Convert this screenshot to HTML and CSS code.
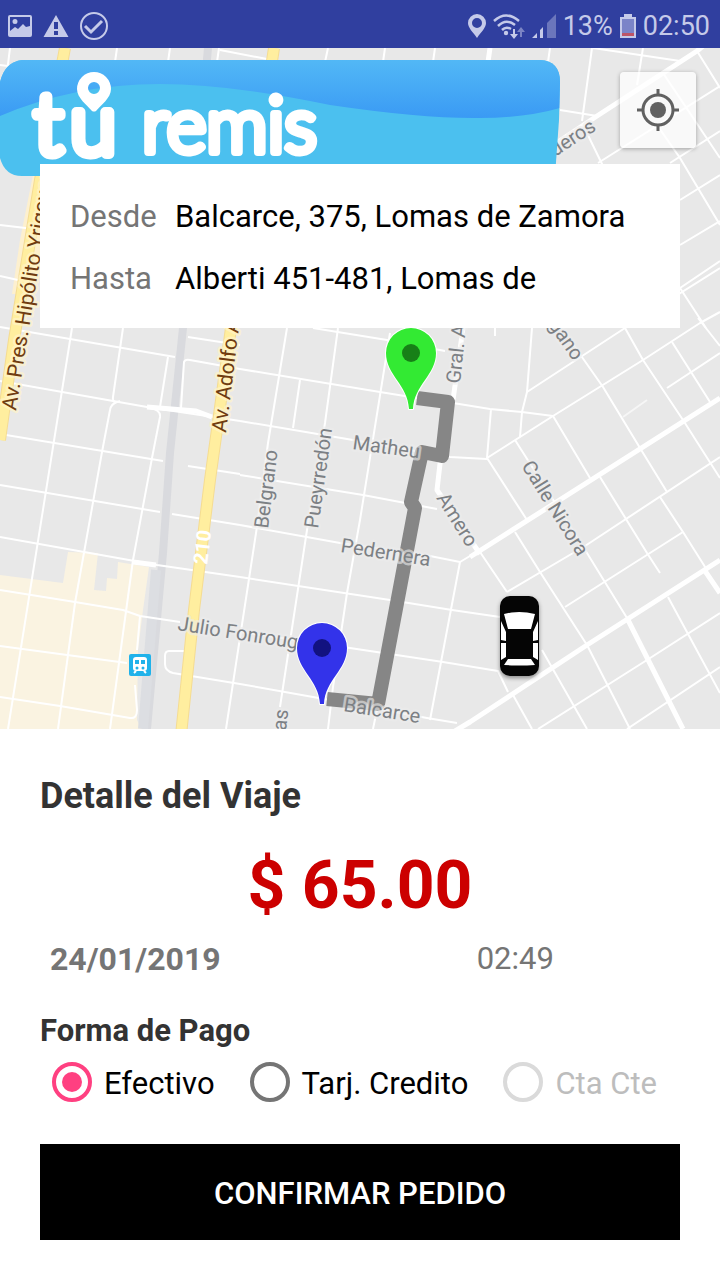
FILE: index.html
```html
<!DOCTYPE html>
<html lang="es">
<head>
<meta charset="utf-8">
<meta name="viewport" content="width=device-width, initial-scale=1">
<title>tú remis - Confirmar pedido</title>
<link rel="stylesheet" href="styles.css">
</head>
<body>
<div class="app">
  <header class="status">
    <div class="status-group status-left">
      <svg class="icon" width="24" height="24" viewBox="0 0 24 24" aria-hidden="true"><path fill-rule="evenodd" d="M2 1h20a2 2 0 0 1 2 2v18a2 2 0 0 1-2 2H2a2 2 0 0 1-2-2V3a2 2 0 0 1 2-2zM2 3v14l5-4 3 2 5-5 3 3 4-1V3zM7 5a2.500 2.500 0 1 1 0 5a2.500 2.500 0 0 1 0-5z"/></svg>
      <svg class="icon" width="26" height="24" viewBox="0 0 26 24" aria-hidden="true"><path fill-rule="evenodd" d="M13 1L25.500 23H.5zM11 8v7h4V8zM11 17v4h4v-4z"/></svg>
      <svg class="icon" width="28" height="28" viewBox="0 0 28 28" aria-hidden="true"><g fill="none" stroke="currentColor" stroke-width="2"><circle cx="14" cy="14" r="13"/><path d="M5 14l6 6L22 9" stroke-width="3"/></g></svg>
    </div>
    <div class="status-group status-right">
      <svg class="icon" width="18" height="24" viewBox="0 0 18 24" aria-hidden="true"><path fill-rule="evenodd" d="M9 0a9 9 0 0 1 9 9c0 5-5 9-9 15C5 18 0 14 0 9a9 9 0 0 1 9-9zM9 4a5 5 0 1 0 0 10A5 5 0 0 0 9 4z"/></svg>
      <svg class="icon" width="32" height="26" viewBox="0 0 32 26" aria-hidden="true"><g fill="none" stroke="currentColor" stroke-width="2.500"><path d="M1 8Q13-3 26 8"/><path d="M5 13Q13 5 22 12"/><path d="M9 17Q13 13 18 16"/></g><circle cx="13" cy="20" r="2.200"/><path d="M20 16h2v5h3l-4 5-4-5h3z"/><path opacity=".5" d="M27 24h2v-5h3l-4-5-4 5h3z"/></svg>
      <svg class="icon" width="24" height="24" viewBox="0 0 24 24" aria-hidden="true"><path opacity=".4" d="M15 9L24 0v24h-9z"/><path d="M0 24l5-5v5zM8 16l3-3v11H8z"/></svg>
      <span class="battery-level">13%</span>
      <svg class="icon" width="16" height="24" viewBox="0 0 16 24" aria-hidden="true"><path d="M4 0h8v3h4v21H0V3h4z"/><path fill="#7b84c8" d="M2 5h12v14H2z"/><path fill="#bd5568" d="M2 19h12v3H2z"/></svg>
      <time>02:50</time>
    </div>
  </header>

  <main class="content">
    <section class="map" aria-label="Mapa del viaje">
      <svg class="map-canvas" viewBox="0 48 720 681" preserveAspectRatio="xMidYMid slice" role="img" aria-label="Recorrido">
        <path class="district" d="M0 575L63 583L68 552L98 553L94 590L106 591L107 578L117 579L118 562L149 567L143 610L138 650L137 720L142 729H0z"/>
        <path class="shade" d="M40 170V270L24 294L12 294L20 240L34 170z"/>
        <g class="rail">
          <path d="M208 48L183 328L170 453L163 553L147 729"/>
          <path class="rail-edge" d="M156 570L143 729"/>
        </g>
        <g class="street">
          <path d="M0 65L8 66M10 48L6 80M117 48L115 62M170 48L168 62M219 48L217 62M220 50L267 59M328 48L325 62M385 48L383 62M435 48L433 62M550 48L548 62"/>
          <path d="M0 225L34 229M0 276L18 280"/>
          <path d="M0 327L175 357M0 381L147 407L240 421M0 434L163 461M188 466L240 474M0 485L160 512M172 514L240 525M0 537L157 565L240 577M0 590L75 602L123 610L140 616L180 622M0 646L127 663"/>
          <path d="M0 697L60 706L130 718Q137 719 137 710L135 685M140 616L137 650"/>
          <path d="M72 328L8 729M123 328L113 397Q112 404 120 401M117 402Q111 404 110 410L102 452L75 603L58 729M168 357L160 407M150 408Q161 410 160 417L152 458L133 560L110 729"/>
          <path d="M181 408L184 362Q185 359 190 360L240 369L380 392L417 398M188 337L240 345M185 651H169Q165 651 165 656V664Q165 671 173 673L240 684L313 697L427 718L457 723"/>
          <path d="M313 328L387 340L445 351M240 421L353 440L450 457L487 459M240 475L363 495L437 509M240 525L340 543L430 556L460 562L480 550M240 577L390 600L452 610L500 617M240 632L350 648L443 662L498 671L508 692"/>
          <path d="M287 328L268 443L258 520L226 729M338 328L325 423L307 530L280 707M300 380L293 428M390 333L360 520L347 593L333 687L328 729M460 562L430 720M378 705L373 729"/>
          <path d="M453 403L490 409L522 412L553 416M532 328L527 392L522 412L520 437M495 328V336M491 409L487 458L527 520M553 416L590 478M515 440L587 553L627 618"/>
          <path d="M527 392L625 328L720 268M487 458L553 416L643 360L700 323L720 312M667 388L720 353"/>
          <path d="M570 340L603 387L640 448L667 492M625 328L643 360L683 420L720 478M672 342L710 402M698 318L720 346M600 477L647 553L660 573M660 497L683 532L707 570"/>
          <path d="M507 592L585 546L720 457M565 607L683 532M480 552L507 592M515 532L540 572L587 645L630 729M542 650L587 729M668 597L720 693M720 613L647 660L538 729M720 667L627 729M513 695L532 729"/>
          <path d="M592 48L582 121M560 110L597 116M643 48L637 85M593 48L680 61M697 51L720 88M663 73L720 158M583 125L603 166M598 163L720 86M657 125L680 158L720 225M670 163L720 131M680 200L720 175M680 245L720 221M680 288L720 261M680 288L706 328"/>
        </g>
        <path class="street faint" d="M623 417L647 400"/>
        <g class="avenue">
          <path d="M720 32L697 51L597 116L540 154M490 48L488 62M470 557L720 398M440 740L470 722L587 645L720 560M627 618L683 729M703 568L720 593M463 328L453 400M441 455L437 490L480 554M147 407L196 411L212 417M133 562L156 565"/>
        </g>
        <g class="highway-case"><path d="M65 48L40 180L14 340L0 440M274 48L231 328L210 480L194 610L181 735"/></g>
        <g class="highway"><path d="M65 48L40 180L14 340L0 440M274 48L231 328L210 480L194 610L181 735"/></g>

        <path class="route" d="M417 398L448 402L442 456L422 452L411 502L415 508L378 704L327 699"/>

        <g class="labels">
          <text class="main-road" transform="translate(16 411) rotate(-81)">Av. Pres. Hipólito Yrigoyen</text>
          <text class="main-road" transform="translate(226 433) rotate(-83)">Av. Adolfo Alsina</text>
          <text class="shield" transform="translate(207 565) rotate(-83)">210</text>
          <text transform="translate(268 529) rotate(-83)">Belgrano</text>
          <text transform="translate(318 529) rotate(-82)">Pueyrredón</text>
          <text transform="translate(352 449) rotate(8)">Matheu</text>
          <text transform="translate(460 384) rotate(-84)">Gral. A</text>
          <text transform="translate(436 498) rotate(58)">Amero</text>
          <text transform="translate(340 552) rotate(9)">Pedernera</text>
          <text transform="translate(177 630) rotate(9)">Julio Fonrouge</text>
          <text transform="translate(343 711) rotate(9)">Balcarce</text>
          <text transform="translate(286 731) rotate(-84)">as</text>
          <text transform="translate(521 466) rotate(58)">Calle Nicora</text>
          <text transform="translate(548 325) rotate(55)">gano</text>
          <text transform="translate(555 157) rotate(-33)">deros</text>
        </g>

        <g>
          <rect x="129" y="654" width="22" height="22" rx="2" fill="#20b2ea"/>
          <rect x="133" y="657" width="14" height="14" rx="3" fill="#fff"/>
          <path d="M136 671L134 673M144 671L146 673" stroke="#fff" stroke-width="2"/>
          <path d="M135 660h4v4h-4zM141 660h4v4h-4z" fill="#20b2ea"/>
          <circle cx="137" cy="668" r="1.500" fill="#20b2ea"/><circle cx="143" cy="668" r="1.500" fill="#20b2ea"/>
        </g>

        <g class="pin" transform="translate(411 353)">
          <path fill="#33ea33" d="M-2 56C-3 32-25 22-25 0A25 25 0 0 1 25 0C25 22 3 32 2 56Z"/>
          <circle r="9" fill="#178017"/>
        </g>
        <g class="pin" transform="translate(322 648)">
          <path fill="#3333ea" d="M-2 56C-3 32-25 22-25 0A25 25 0 0 1 25 0C25 22 3 32 2 56Z"/>
          <circle r="9" fill="#121280"/>
        </g>

        <g class="car" transform="translate(500 596)">
          <rect width="39" height="80" rx="10" fill="#050505"/>
          <g fill="#fff">
            <path d="M4 18Q19 14 35 18L31 33H8z"/>
            <path d="M1 25L6 36V45L1 44zM38 25L33 36V45L38 44z"/>
            <path d="M1 47H6V61L1 64zM38 47H33V61L38 64z"/>
            <path d="M8 63H31L35 69Q19 70 4 69z"/>
          </g>
        </g>
      </svg>

      <div class="map-top">
        <svg class="brand" viewBox="0 0 560 116" role="img" aria-label="tú remis">
          <defs>
            <linearGradient id="sky" x1="0" y1="0" x2="0" y2="1">
              <stop offset="0" stop-color="#52b8f6"/><stop offset="1" stop-color="#3a9af4"/>
            </linearGradient>
            <clipPath id="brand-shape"><path d="M22 0H540Q560 1 560 22L559 60L555 116H22Q5 116 0 98V22Q5 2 22 0z"/></clipPath>
          </defs>
          <g clip-path="url(#brand-shape)">
            <rect width="560" height="116" fill="#4bc0ef"/>
            <path fill="url(#sky)" d="M0 0H560V48Q525 58 480 58Q425 59 330 45Q230 24 160 24Q75 24 0 56z"/>
          </g>
          <text class="brand-short" y="94"><tspan x="34">t</tspan><tspan x="70">u</tspan></text>
          <text class="brand-name" x="142" y="92">remis</text>
          <path fill="#fff" fill-rule="evenodd" d="M94 12a17 17 0 0 1 17 17c0 9-10 16-15 22q-2 1-4 0C87 45 77 38 77 29a17 17 0 0 1 17-17zM94 22a6 6 0 1 0 0 12a6 6 0 0 0 0-12z"/>
        </svg>
        <button class="locate" type="button" aria-label="Mi ubicación">
          <svg width="42" height="42" viewBox="0 0 42 42" aria-hidden="true"><g fill="none" stroke="#616161" stroke-width="3"><circle cx="21" cy="21" r="15"/><path d="M21 0v6M21 36v6M0 21h6M36 21h6"/></g><circle cx="21" cy="21" r="8" fill="#616161"/></svg>
        </button>
      </div>

      <dl class="addresses">
        <div class="address"><dt>Desde</dt><dd>Balcarce, 375, Lomas de Zamora</dd></div>
        <div class="address"><dt>Hasta</dt><dd>Alberti 451-481, Lomas de</dd></div>
      </dl>
    </section>

    <form class="trip">
      <h1 class="trip-title">Detalle del Viaje</h1>
      <p class="price">$ 65.00</p>
      <div class="when"><span class="date">24/01/2019</span><span class="hour">02:49</span></div>
      <fieldset class="payment">
        <legend>Forma de Pago</legend>
        <div class="options">
          <label class="option"><input type="radio" name="pago" checked><span>Efectivo</span></label>
          <label class="option"><input type="radio" name="pago"><span>Tarj. Credito</span></label>
          <label class="option option-off"><input type="radio" name="pago" disabled><span>Cta Cte</span></label>
        </div>
      </fieldset>
      <button class="confirm" type="button">CONFIRMAR PEDIDO</button>
    </form>
  </main>
</div>
</body>
</html>
```
FILE: styles.css
```css
* { box-sizing: border-box; }

body {
  margin: 0;
  background: #fff;
  color: #000;
  font-family: Roboto, "Noto Sans", sans-serif;
}

.app { display: flex; flex-direction: column; min-height: 100vh; }

.status {
  display: flex;
  align-items: center;
  justify-content: space-between;
  height: 48px;
  padding: 4px 10px 0 8px;
  background: #303f9f;
  color: #c5cae9;
  font-size: 27px;
  line-height: 36px;
}
.status-group { display: flex; align-items: center; }
.status-left { gap: 11px; }
.status-right { gap: 7px; }
.icon { display: block; flex: none; fill: currentColor; }

.content { display: flex; flex: 1; flex-direction: column; }

.map {
  position: relative;
  flex: 1;
  min-height: 480px;
  padding-top: 12px;
  overflow: hidden;
  background: #e8e8e8;
}
.map-canvas { position: absolute; inset: 0; width: 100%; height: 100%; }
.map-canvas path { stroke-linejoin: round; }
.district { fill: #faf3e1; }
.shade { fill: #fdf0cf; }
.rail { fill: none; stroke: #d9dade; stroke-width: 8; }
.rail-edge { stroke: #dcdee2; stroke-width: 10; }
.street { fill: none; stroke: #fff; stroke-width: 2; }
.faint { opacity: .6; }
.avenue { fill: none; stroke: #fff; stroke-width: 5; }
.highway-case { fill: none; stroke: #f5dc92; stroke-width: 12; }
.highway { fill: none; stroke: #ffee9f; stroke-width: 10; }
.route { fill: none; stroke: #868686; stroke-width: 14; }
.labels {
  fill: #7c8084;
  stroke: rgba(236, 236, 236, .6);
  stroke-width: 5;
  stroke-linejoin: round;
  paint-order: stroke;
  font-size: 20px;
}
.main-road { fill: #703c10; stroke: rgba(255, 244, 200, .7); font-size: 21px; }
.shield { fill: #fff; stroke: none; font-weight: 700; }
.pin path { stroke: #fff; stroke-width: 2; paint-order: stroke; }
.car { filter: drop-shadow(0 2px 2px rgba(0, 0, 0, .4)); }

.map-top {
  position: relative;
  display: flex;
  align-items: flex-start;
  justify-content: space-between;
  padding-right: 24px;
}
.brand { width: 82%; max-width: 560px; }
.brand text {
  fill: #fff;
  stroke: #fff;
  stroke-linejoin: round;
  font-family: Lato, sans-serif;
  font-weight: 300;
}
.brand-short { font-size: 84px; stroke-width: 10; }
.brand-name { font-size: 76px; stroke-width: 8; }

.locate {
  display: grid;
  flex: none;
  place-items: center;
  width: 76px;
  height: 76px;
  margin-top: 12px;
  padding: 0;
  border: 0;
  border-radius: 4px;
  background: rgba(255, 255, 255, .75);
  box-shadow: 0 1px 4px rgba(0, 0, 0, .3);
}

.addresses {
  position: relative;
  display: grid;
  gap: 24px;
  margin: -12px 40px 0;
  padding: 34px 30px 30px;
  background: #fff;
  font-size: 31px;
  line-height: 38px;
}
.address { display: flex; }
.address dt { flex: none; width: 105px; color: #757575; }
.address dd { margin: 0; }

.trip { display: flex; flex-direction: column; padding: 46px 40px 40px; background: #fff; }
.trip-title { margin: 0; color: #333; font-size: 36px; line-height: 42px; }
.price {
  margin: 29px 0 14px;
  color: #c00;
  font-size: 66px;
  font-weight: 700;
  line-height: 80px;
  text-align: center;
}
.when {
  display: grid;
  grid-template-columns: 2fr 1fr;
  color: #757575;
  font-size: 31px;
  line-height: 38px;
}
.when span { padding-left: 10px; }
.when .date { font-size: 32px; font-weight: 700; }
.payment { min-width: 0; margin: 34px 0 38px; padding: 0; border: 0; }
.payment legend { padding: 0; color: #333; font-size: 31px; font-weight: 700; line-height: 38px; }
.options { display: flex; flex-wrap: wrap; column-gap: 35px; padding: 8px 0 0 12px; }
.option { display: flex; align-items: center; gap: 12px; font-size: 31px; line-height: 44px; }
.option span { padding-top: 4px; }
.option input {
  appearance: none;
  display: grid;
  place-items: center;
  width: 40px;
  height: 40px;
  margin: 0;
  border: 4px solid #757575;
  border-radius: 50%;
}
.option input:checked { border-color: #ff4081; }
.option input:checked::before {
  content: "";
  width: 20px;
  height: 20px;
  border-radius: 50%;
  background: #ff4081;
}
.option-off { color: #bdbdbd; }
.option-off input { border-color: #dadada; }
.confirm {
  min-height: 96px;
  padding: 4px 0 0;
  border: 0;
  background: #000;
  color: #fff;
  font: 500 31px/38px Roboto, "Noto Sans", sans-serif;
}
```
